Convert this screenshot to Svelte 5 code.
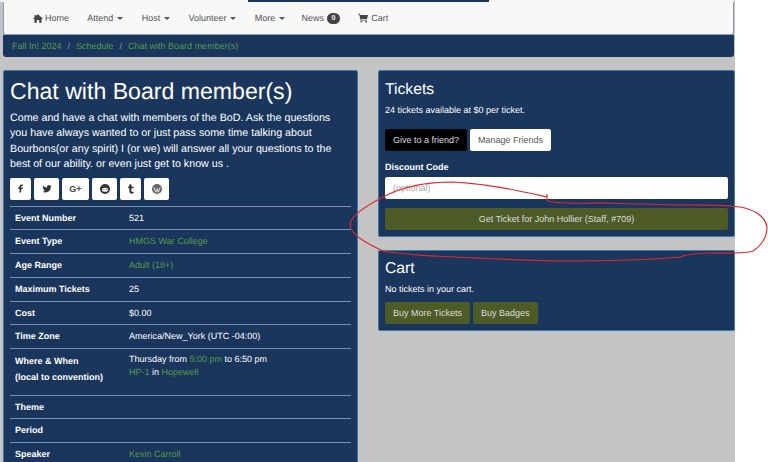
<script>
  const navItems = ['Attend', 'Host', 'Volunteer', 'More'];
  const shares = ['f', 'tw', 'G+', 're', 't', 'wp'];
</script>

<div class="page">
  <div class="topline"><div class="topbar"></div></div>
  <header class="head">
    <nav class="navbar">
      <a class="nav-item home">
        <svg class="ico" viewBox="0 0 14 12" width="10" height="9"><path d="M7 0 L14 6.2 L12.4 6.8 L12 6.3 V12 H8.6 V8 H5.4 V12 H2 V6.3 L1.6 6.8 L0 6.2 L2.2 4.2 V1 H4 V2.6 Z" fill="#444" /></svg>
        Home
      </a>
      {#each navItems as item}
        <a class="nav-item">{item} <span class="caret"></span></a>
      {/each}
      <a class="nav-item news">News <span class="badge">0</span></a>
      <a class="nav-item">
        <svg class="ico" viewBox="0 0 13 12" width="10" height="10"><path d="M0 0.5 H2.4 L2.9 2 H13 L11.8 7.2 H4 L4.3 8.4 H11.6 V9.4 H3.4 L1.7 1.5 H0 Z" fill="#444" /><circle cx="4.4" cy="10.8" r="1.1" fill="#444" /><circle cx="10.6" cy="10.8" r="1.1" fill="#444" /></svg>
        Cart
      </a>
    </nav>
    <ol class="crumbs">
      <li><a>Fall In! 2024</a></li>
      <li class="sep">/</li>
      <li><a>Schedule</a></li>
      <li class="sep">/</li>
      <li><a>Chat with Board member(s)</a></li>
    </ol>
  </header>

  <main class="cols">
    <section class="panel left">
      <h1>Chat with Board member(s)</h1>
      <p class="lead">Come and have a chat with members of the BoD. Ask the questions you have always wanted to or just pass some time talking about Bourbons(or any spirit) I (or we) will answer all your questions to the best of our ability. or even just get to know us .</p>
      <div class="shares">
        {#each shares as s}
          <button class="share {s === 'G+' ? 'gp' : s === 'f' || s === 't' ? 'thin' : ''}">
            {#if s === 'f'}
              <svg viewBox="0 0 8 13" width="5" height="9"><path d="M5 13 V7.2 H7.2 L7.6 5 H5 V3.5 C5 2.8 5.3 2.4 6.1 2.4 H7.6 V0.2 C7.2 0.1 6.5 0 5.6 0 C3.6 0 2.4 1.2 2.4 3.2 V5 H0.3 V7.2 H2.4 V13 Z" fill="#333" /></svg>
            {:else if s === 'tw'}
              <svg viewBox="0 0 14 12" width="10" height="8"><path d="M14 1.4 C13.5 1.7 12.9 1.8 12.3 1.9 C12.9 1.5 13.4 1 13.6 0.3 C13 0.6 12.4 0.9 11.7 1 C10.5 -0.3 8.4 0 7.6 1.3 C7.1 2.1 7 3 7.2 3.7 C4.7 3.6 2.6 2.4 1.1 0.6 C0.4 1.9 0.8 3.4 1.9 4.2 C1.4 4.2 1 4 0.6 3.8 C0.6 5.2 1.6 6.3 2.9 6.6 C2.5 6.7 2 6.7 1.6 6.6 C2 7.8 3 8.6 4.3 8.6 C3.1 9.6 1.5 10 0 9.9 C5.9 13.5 13 9.6 12.6 3 C13.2 2.6 13.6 2.1 14 1.4 Z" fill="#333" /></svg>
            {:else if s === 'G+'}
              <span class="gplus">G+</span>
            {:else if s === 're'}
              <svg viewBox="0 0 12 12" width="10" height="10"><circle cx="6" cy="6" r="6" fill="#333" /><ellipse cx="6" cy="7" rx="3.6" ry="2.4" fill="#fff" /><circle cx="4.6" cy="6.6" r=".6" fill="#333" /><circle cx="7.4" cy="6.6" r=".6" fill="#333" /></svg>
            {:else if s === 't'}
              <svg viewBox="0 0 8 13" width="6" height="10"><path d="M2 0 H4.5 V3 H7.3 V5.4 H4.5 V9 C4.5 10.3 5.6 10.6 7.5 10 V12.3 C4.2 13.6 1.8 12.4 1.8 9.6 V5.4 H0.3 V3.6 C1.3 3.2 1.9 2 2 0 Z" fill="#333" /></svg>
            {:else}
              <svg viewBox="0 0 12 12" width="10" height="10"><circle cx="6" cy="6" r="6" fill="#666" /><path d="M2.2 4 L4.4 10 L6 5.6 L7.6 10 L9.8 4" fill="none" stroke="#fff" stroke-width="1" /></svg>
            {/if}
          </button>
        {/each}
      </div>

      <div class="rows">
        <div class="row"><b>Event Number</b><span>521</span></div>
        <div class="row"><b>Event Type</b><a>HMGS War College</a></div>
        <div class="row"><b>Age Range</b><a>Adult (18+)</a></div>
        <div class="row"><b>Maximum Tickets</b><span>25</span></div>
        <div class="row"><b>Cost</b><span>$0.00</span></div>
        <div class="row"><b>Time Zone</b><span>America/New_York (UTC -04:00)</span></div>
        <div class="row tall">
          <b>Where &amp; When<br />(local to convention)</b>
          <span>Thursday from <a>5:00 pm</a> to 6:50 pm<br /><a>HP-1</a> in <a>Hopewell</a></span>
        </div>
        <div class="row"><b>Theme</b><span></span></div>
        <div class="row"><b>Period</b><span></span></div>
        <div class="row"><b>Speaker</b><a>Kevin Carroll</a></div>
      </div>
    </section>

    <div class="side">
      <section class="panel tickets">
        <h2>Tickets</h2>
        <p class="small">24 tickets available at $0 per ticket.</p>
        <div class="btns">
          <button class="btn black">Give to a friend?</button>
          <button class="btn white">Manage Friends</button>
        </div>
        <label class="lbl" for="code">Discount Code</label>
        <input id="code" class="input" placeholder="(optional)" />
        <button class="btn olive wide">Get Ticket for John Hollier (Staff, #709)</button>
      </section>

      <section class="panel cart">
        <h2>Cart</h2>
        <p class="small">No tickets in your cart.</p>
        <div class="btns">
          <button class="btn olive">Buy More Tickets</button>
          <button class="btn olive">Buy Badges</button>
        </div>
      </section>
    </div>
  </main>

  <!-- hand drawn annotation on top of the screenshot -->
  <svg class="scribble" viewBox="0 0 768 462" width="768" height="462">
    <path d="M547 197 C520 191 490 184 453 182 C425 182 403 187 387 195 C365 206 350 216 350 225 C352 236 368 244 383 251 C410 256 470 258 553 261 C600 261 650 260 680 257 C688 254 695 253 710 253 C725 253 745 254 753 251 C762 245 767 236 767 227 C765 215 752 209 740 207 C715 204 690 205 673 205 C650 204 625 204 607 203 C590 203 570 204 553 202 C550 202 548 201 547 200 L547 194" fill="none" stroke="#e0262b" stroke-width="1.1" />
  </svg>
</div>

<style>
  :global(body) {
    margin: 0;
    background: #fff;
    overflow: hidden;
  }
  .page {
    position: relative;
    width: 735px;
    height: 462px;
    overflow: visible;
    background: #c4c4c4;
    font-family: "Liberation Sans", Arial, sans-serif;
    font-size: 9px;
    color: #fff;
    text-rendering: geometricPrecision;
  }
  .topline {
    height: 2px;
    background: #f6f6f6;
    padding-left: 248px;
    margin-right: 1px;
  }
  .topbar {
    width: 241px;
    height: 2px;
    background: #1a365d;
  }
  .head {
    margin: 0 1px 0 3px;
  }
  .navbar {
    display: flex;
    align-items: center;
    gap: 18.3px;
    height: 33px;
    padding-left: 29px;
    box-sizing: border-box;
    background: #f8f8f8;
    border: 1px solid #8a9ab0;
    border-width: 0 1px 1px 1px;
    border-radius: 0 0 3px 3px;
    color: #555;
  }
  .nav-item {
    display: inline-flex;
    align-items: center;
    gap: 3px;
    color: #555;
  }
  .home {
    gap: 2px;
  }
  .news {
    margin-left: -2px;
  }
  .caret {
    display: inline-block;
    margin-left: 1px;
    border-top: 3px solid #555;
    border-left: 3px solid transparent;
    border-right: 3px solid transparent;
  }
  .badge {
    background: #444;
    color: #fff;
    font-size: 7px;
    font-weight: 700;
    border-radius: 7px;
    padding: 2px 4.5px;
  }
  .crumbs {
    display: flex;
    gap: 6px;
    list-style: none;
    margin: 0;
    height: 22px;
    align-items: center;
    padding: 0 0 0 9px;
    background: #1a365d;
    border-radius: 0 0 3px 3px;
    color: #8a9ab0;
  }
  a {
    color: #559a4b;
  }
  .cols {
    display: flex;
    align-items: flex-start;
    gap: 20px;
    margin: 13px 0 0 3px;
  }
  .panel {
    box-sizing: border-box;
    background: #1a365d;
    border: 1px solid #3c7ba8;
    border-radius: 2px;
  }
  .left {
    width: 355px;
    height: 400px;
    padding: 0 6px;
    flex: none;
  }
  h1 {
    margin: 6px 0 0;
    font-size: 23.1px;
    font-weight: 400;
    line-height: 28px;
  }
  .lead {
    margin: 6px 0 0;
    padding-right: 10px;
    font-size: 10.7px;
    line-height: 15.4px;
  }
  .shares {
    display: flex;
    gap: 3px;
    margin: 5px 0 6px;
    height: 22px;
  }
  .share {
    display: flex;
    align-items: center;
    justify-content: center;
    box-sizing: border-box;
    height: 22px;
    width: 25px;
    padding: 0;
    background: #fff;
    border: 0;
    border-radius: 2px;
  }
  .thin {
    width: 21px;
  }
  .gp {
    width: 27px;
  }
  .gplus {
    font-size: 9px;
    font-weight: 700;
    color: #444;
  }
  .row {
    display: grid;
    grid-template-columns: 114px 1fr;
    align-items: center;
    box-sizing: border-box;
    height: 23.75px;
    padding: 0 5px;
    border-top: 1px solid #7f8ea6;
    line-height: 13px;
  }
  .row.tall {
    height: 46.5px;
    align-items: start;
    padding-top: 4px;
  }
  .row.tall b {
    line-height: 16px;
  }
  .side {
    width: 357px;
    flex: none;
    display: flex;
    flex-direction: column;
    gap: 13px;
  }
  .tickets,
  .cart {
    padding: 0 6px;
  }
  .tickets {
    height: 167px;
  }
  .cart {
    height: 81px;
  }
  h2 {
    margin: 10px 0 0;
    font-size: 15.7px;
    font-weight: 400;
    line-height: 18px;
  }
  .cart h2 {
    margin-top: 9px;
  }
  .small {
    margin: 5px 0 0;
    line-height: 13px;
  }
  .btns {
    display: flex;
    gap: 3px;
    margin-top: 12px;
  }
  .cart .btns {
    margin-top: 6px;
  }
  .btn {
    font: inherit;
    height: 22px;
    padding: 0 8px;
    border: 0;
    border-radius: 2px;
    color: #ddd;
  }
  .black {
    background: #000;
  }
  .white {
    background: #fff;
    color: #555;
  }
  .olive {
    background: #4d5b26;
  }
  .lbl {
    display: block;
    margin-top: 10px;
    font-weight: 700;
    line-height: 13px;
  }
  .input {
    display: block;
    box-sizing: border-box;
    width: 100%;
    height: 22px;
    margin-top: 3px;
    padding: 0 8px;
    border: 0;
    border-radius: 2px;
    background: #fff;
    font: inherit;
  }
  .input::placeholder {
    color: #aaa;
  }
  .wide {
    display: block;
    width: 100%;
    margin-top: 9px;
  }
  .scribble {
    position: absolute;
    left: 0;
    top: 0;
    pointer-events: none;
  }
</style>
